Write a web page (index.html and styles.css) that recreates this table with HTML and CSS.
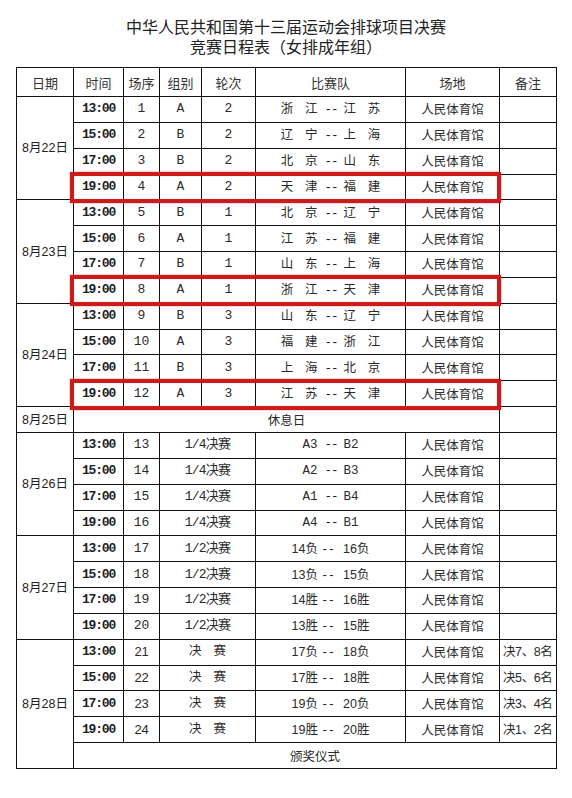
FILE: index.html
```html
<!DOCTYPE html>
<html lang="zh-CN">
<head>
<meta charset="utf-8">
<title>竞赛日程表（女排成年组）</title>
<link rel="stylesheet" href="styles.css">
</head>
<body>
<div class="page">
  <h1 class="title">
    <span class="line">中华人民共和国第十三届运动会排球项目决赛</span>
    <span class="line">竞赛日程表（女排成年组）</span>
  </h1>
  <table class="sched">
    <colgroup>
      <col class="c-date"><col class="c-time"><col class="c-no"><col class="c-grp"><col class="c-rnd"><col class="c-vs"><col class="c-venue"><col class="c-note">
    </colgroup>
    <thead>
      <tr><th>日期</th><th>时间</th><th>场序</th><th>组别</th><th>轮次</th><th>比赛队</th><th>场地</th><th>备注</th></tr>
    </thead>
    <tbody>
      <tr><td class="date" rowspan="4">8月22日</td><td class="time">13:00</td><td class="num">1</td><td class="num">A</td><td class="num">2</td><td class="vs"><span class="nm">浙 江</span><span class="dash">--</span><span class="nm">江 苏</span></td><td class="venue">人民体育馆</td><td class="note"></td></tr>
      <tr><td class="time">15:00</td><td class="num">2</td><td class="num">B</td><td class="num">2</td><td class="vs"><span class="nm">辽 宁</span><span class="dash">--</span><span class="nm">上 海</span></td><td class="venue">人民体育馆</td><td class="note"></td></tr>
      <tr><td class="time">17:00</td><td class="num">3</td><td class="num">B</td><td class="num">2</td><td class="vs"><span class="nm">北 京</span><span class="dash">--</span><span class="nm">山 东</span></td><td class="venue">人民体育馆</td><td class="note"></td></tr>
      <tr><td class="time hl-cell"><span class="hl"></span>19:00</td><td class="num">4</td><td class="num">A</td><td class="num">2</td><td class="vs"><span class="nm">天 津</span><span class="dash">--</span><span class="nm">福 建</span></td><td class="venue">人民体育馆</td><td class="note"></td></tr>

      <tr><td class="date" rowspan="4">8月23日</td><td class="time">13:00</td><td class="num">5</td><td class="num">B</td><td class="num">1</td><td class="vs"><span class="nm">北 京</span><span class="dash">--</span><span class="nm">辽 宁</span></td><td class="venue">人民体育馆</td><td class="note"></td></tr>
      <tr><td class="time">15:00</td><td class="num">6</td><td class="num">A</td><td class="num">1</td><td class="vs"><span class="nm">江 苏</span><span class="dash">--</span><span class="nm">福 建</span></td><td class="venue">人民体育馆</td><td class="note"></td></tr>
      <tr><td class="time">17:00</td><td class="num">7</td><td class="num">B</td><td class="num">1</td><td class="vs"><span class="nm">山 东</span><span class="dash">--</span><span class="nm">上 海</span></td><td class="venue">人民体育馆</td><td class="note"></td></tr>
      <tr><td class="time hl-cell"><span class="hl"></span>19:00</td><td class="num">8</td><td class="num">A</td><td class="num">1</td><td class="vs"><span class="nm">浙 江</span><span class="dash">--</span><span class="nm">天 津</span></td><td class="venue">人民体育馆</td><td class="note"></td></tr>

      <tr><td class="date" rowspan="4">8月24日</td><td class="time">13:00</td><td class="num">9</td><td class="num">B</td><td class="num">3</td><td class="vs"><span class="nm">山 东</span><span class="dash">--</span><span class="nm">辽 宁</span></td><td class="venue">人民体育馆</td><td class="note"></td></tr>
      <tr><td class="time">15:00</td><td class="num">10</td><td class="num">A</td><td class="num">3</td><td class="vs"><span class="nm">福 建</span><span class="dash">--</span><span class="nm">浙 江</span></td><td class="venue">人民体育馆</td><td class="note"></td></tr>
      <tr><td class="time">17:00</td><td class="num">11</td><td class="num">B</td><td class="num">3</td><td class="vs"><span class="nm">上 海</span><span class="dash">--</span><span class="nm">北 京</span></td><td class="venue">人民体育馆</td><td class="note"></td></tr>
      <tr><td class="time hl-cell"><span class="hl"></span>19:00</td><td class="num">12</td><td class="num">A</td><td class="num">3</td><td class="vs"><span class="nm">江 苏</span><span class="dash">--</span><span class="nm">天 津</span></td><td class="venue">人民体育馆</td><td class="note"></td></tr>

      <tr><td class="date">8月25日</td><td class="rest" colspan="6">休息日</td><td class="note"></td></tr>

      <tr><td class="date" rowspan="4">8月26日</td><td class="time">13:00</td><td class="num">13</td><td class="num stage" colspan="2">1/4决赛</td><td class="vs">A3<span class="dash">--</span>B2</td><td class="venue">人民体育馆</td><td class="note"></td></tr>
      <tr><td class="time">15:00</td><td class="num">14</td><td class="num stage" colspan="2">1/4决赛</td><td class="vs">A2<span class="dash">--</span>B3</td><td class="venue">人民体育馆</td><td class="note"></td></tr>
      <tr><td class="time">17:00</td><td class="num">15</td><td class="num stage" colspan="2">1/4决赛</td><td class="vs">A1<span class="dash">--</span>B4</td><td class="venue">人民体育馆</td><td class="note"></td></tr>
      <tr><td class="time">19:00</td><td class="num">16</td><td class="num stage" colspan="2">1/4决赛</td><td class="vs">A4<span class="dash">--</span>B1</td><td class="venue">人民体育馆</td><td class="note"></td></tr>

      <tr><td class="date" rowspan="4">8月27日</td><td class="time">13:00</td><td class="num">17</td><td class="num stage" colspan="2">1/2决赛</td><td class="res">14负 <span class="dd">--</span>  16负</td><td class="venue">人民体育馆</td><td class="note"></td></tr>
      <tr><td class="time">15:00</td><td class="num">18</td><td class="num stage" colspan="2">1/2决赛</td><td class="res">13负 <span class="dd">--</span>  15负</td><td class="venue">人民体育馆</td><td class="note"></td></tr>
      <tr><td class="time">17:00</td><td class="num">19</td><td class="num stage" colspan="2">1/2决赛</td><td class="res">14胜 <span class="dd">--</span>  16胜</td><td class="venue">人民体育馆</td><td class="note"></td></tr>
      <tr><td class="time">19:00</td><td class="num">20</td><td class="num stage" colspan="2">1/2决赛</td><td class="res">13胜 <span class="dd">--</span>  15胜</td><td class="venue">人民体育馆</td><td class="note"></td></tr>

      <tr><td class="date" rowspan="5">8月28日</td><td class="time">13:00</td><td class="num sans">21</td><td class="stage" colspan="2"><span class="sp">决赛</span></td><td class="res">17负 <span class="dd">--</span>  18负</td><td class="venue">人民体育馆</td><td class="note">决7、8名</td></tr>
      <tr><td class="time">15:00</td><td class="num sans">22</td><td class="stage" colspan="2"><span class="sp">决赛</span></td><td class="res">17胜 <span class="dd">--</span>  18胜</td><td class="venue">人民体育馆</td><td class="note">决5、6名</td></tr>
      <tr><td class="time">17:00</td><td class="num sans">23</td><td class="stage" colspan="2"><span class="sp">决赛</span></td><td class="res">19负 <span class="dd">--</span>  20负</td><td class="venue">人民体育馆</td><td class="note">决3、4名</td></tr>
      <tr><td class="time">19:00</td><td class="num sans">24</td><td class="stage" colspan="2"><span class="sp">决赛</span></td><td class="res">19胜 <span class="dd">--</span>  20胜</td><td class="venue">人民体育馆</td><td class="note">决1、2名</td></tr>
      <tr><td class="rest" colspan="7">颁奖仪式</td></tr>
    </tbody>
  </table>
</div>
</body>
</html>
```
FILE: styles.css
```css
html, body {
  margin: 0;
  padding: 0;
  background: #ffffff;
}

body {
  font-family: "Noto Sans CJK SC", sans-serif;
  color: #262626;
}

.page {
  width: 572px;
  padding-top: 16px;
}

.title {
  margin: 0 0 11px;
  display: flex;
  flex-direction: column;
  align-items: center;
  font-size: 16px;
  line-height: 20px;
  font-weight: 400;
  color: #222;
}

.sched {
  margin-left: 16px;
  width: 541px;
  border-collapse: collapse;
  table-layout: fixed;
  border: 1px solid #111;
}

.c-date { width: 57px; }
.c-time { width: 50px; }
.c-no { width: 36px; }
.c-grp { width: 42px; }
.c-rnd { width: 54px; }
.c-vs { width: 150px; }
.c-venue { width: 94px; }
.c-note { width: 57px; }

.sched th,
.sched td {
  border: 1px solid #111;
  padding: 0;
  text-align: center;
  vertical-align: middle;
  white-space: nowrap;
  overflow: visible;
}

.sched th {
  height: 28px;
  font-size: 13px;
  font-weight: 400;
  color: #333;
  font-family: "Noto Sans CJK SC", sans-serif;
}

.sched td {
  height: 24.85px;
  font-size: 12.5px;
  line-height: 16px;
}

.date {
  font-family: "Liberation Sans", "Noto Sans CJK SC", sans-serif;
  font-size: 12.5px;
  color: #222;
}

.time {
  font-family: "Liberation Mono", monospace;
  font-weight: 700;
  font-size: 13px !important;
  letter-spacing: -1.2px;
  color: #1e1e1e;
}

.num {
  font-family: "Liberation Mono", "Noto Sans CJK SC", monospace;
  font-size: 13px !important;
  color: #2a2a2a;
}

.stage {
  font-family: "Liberation Mono", "Noto Sans CJK SC", monospace;
  letter-spacing: -0.8px;
  color: #2a2a2a;
}

.sp {
  letter-spacing: 12px;
  margin-right: -12px;
}

.vs {
  font-family: "Liberation Mono", "Noto Sans CJK SC", monospace;
  color: #2a2a2a;
}

.nm {
  font-family: "Noto Sans CJK SC", sans-serif;
  white-space: pre;
  word-spacing: 9px;
}

.dash {
  font-family: "Liberation Mono", monospace;
  letter-spacing: -1px;
  margin: 0 6px 0 7px;
  color: #222;
}

.sched td.res {
  font-family: "Liberation Sans", "Noto Sans CJK SC", sans-serif;
  white-space: pre;
  color: #2a2a2a;
}

.dd {
  font-family: "Liberation Sans", sans-serif;
  font-size: 13px;
  letter-spacing: 2.5px;
  padding-left: 1px;
  color: #222;
}

.num.sans {
  font-family: "Liberation Sans", "Noto Sans CJK SC", sans-serif;
  letter-spacing: -0.3px;
}

.venue {
  font-family: "Noto Sans CJK SC", sans-serif;
  color: #2a2a2a;
}

.note {
  text-align: left !important;
  padding-left: 3px !important;
  font-family: "Liberation Sans", "Noto Sans CJK SC", sans-serif;
  letter-spacing: -0.4px;
  color: #2a2a2a;
}

.rest {
  font-family: "Noto Sans CJK SC", sans-serif;
  color: #2a2a2a;
}

.hl-cell {
  position: relative;
}

.hl {
  position: absolute;
  left: -4px;
  top: -2.5px;
  width: 431px;
  height: 31px;
  box-sizing: border-box;
  border: 4px solid #cc1b1b;
  box-shadow: 0 0 2px rgba(204, 27, 27, 0.55), inset 0 0 1px rgba(204, 27, 27, 0.5);
  pointer-events: none;
}
```
